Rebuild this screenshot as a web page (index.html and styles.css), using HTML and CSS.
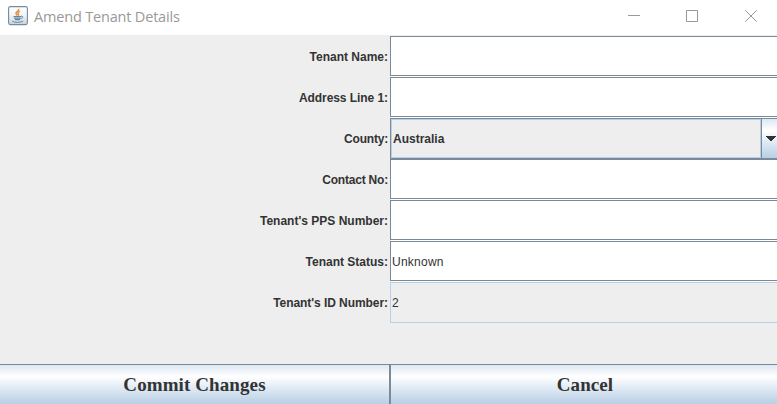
FILE: index.html
```html
<!DOCTYPE html>
<html lang="en">
<head>
<meta charset="utf-8">
<title>Amend Tenant Details</title>
<link rel="stylesheet" href="styles.css">
</head>
<body>
<div class="window">
  <header class="titlebar">
    <svg class="app-icon" width="20" height="20" viewBox="0 0 20 20">
      <defs><linearGradient id="tile" x1="0" y1="0" x2="0" y2="1"><stop offset="0" stop-color="#fff"/><stop offset=".45" stop-color="#f4f6f7"/><stop offset="1" stop-color="#c9d3dc"/></linearGradient></defs>
      <rect x=".6" y=".6" width="18.8" height="18" rx="1.8" fill="url(#tile)" stroke="#6f8ca3" stroke-width="1.1"/>
      <path d="M10.8 2.8C11.5 5 7.3 5.6 8 7.5c.2.8 1 1.2 1.2 2M12 5.4c-2.3 1-2.6 1.8-1.7 2.7.5.6.2 1.2-.3 1.6" fill="none" stroke="#e8924b" stroke-width="1.5"/>
      <path d="M5.5 10.5h7.6M6 12.1h6.8M7 13.6h5" fill="none" stroke="#5f86a3" stroke-width="1.2"/>
      <path d="M13 10.2c2.6-.5 2.3 2-.3 2.6M4.3 15.2c2 1.6 8.5 1.5 10.8-.1" fill="none" stroke="#5f86a3" stroke-width="1"/>
    </svg>
    <h1 class="title">Amend Tenant Details</h1>
    <div class="controls">
      <svg width="12" height="12" viewBox="0 0 12 12"><path d="M0 5.5h12"/></svg>
      <svg class="maximize" width="12" height="12" viewBox="0 0 12 12"><path d="M.5.5h11v11H.5z"/></svg>
      <svg width="12" height="12" viewBox="0 0 12 12"><path d="M.3.3l11.4 11.4M11.7.3L.3 11.7"/></svg>
    </div>
  </header>
  <main class="form">
    <div class="row"><span class="label">Tenant Name:</span><div class="field"></div></div>
    <div class="row"><span class="label snug">Address Line 1:</span><div class="field"></div></div>
    <div class="row"><span class="label tight">County:</span>
      <div class="combo"><span class="value">Australia</span><span class="arrow"><svg width="10" height="5" viewBox="0 0 10 5" shape-rendering="crispEdges"><path d="M0 0h10v1H9v1H8v1H7v1H6v1H4V4H3V3H2V2H1V1H0z" fill="#333"/></svg></span></div>
    </div>
    <div class="row"><span class="label tight">Contact No:</span><div class="field"></div></div>
    <div class="row"><span class="label">Tenant's PPS Number:</span><div class="field"></div></div>
    <div class="row"><span class="label">Tenant Status:</span><div class="field">Unknown</div></div>
    <div class="row"><span class="label snug">Tenant's ID Number:</span><div class="field readonly">2</div></div>
  </main>
  <footer class="actions">
    <button class="button">Commit Changes</button>
    <button class="button">Cancel</button>
  </footer>
</div>
</body>
</html>
```
FILE: styles.css
```css
* { box-sizing: border-box; }
body { margin: 0; overflow: hidden; }
.window {
  width: 777px;
  height: 404px;
  display: flex;
  flex-direction: column;
  overflow: hidden;
  background: #eee;
  color: #333;
  font: 12px "Liberation Sans", Arial, sans-serif;
}
.titlebar {
  height: 35px;
  flex: none;
  display: flex;
  align-items: center;
  padding: 0 20px 3px 8px;
  background: #fff;
}
.app-icon { flex: none; margin-right: 6px; }
.title {
  margin: 0;
  flex: 1;
  color: #999;
  font: 400 14.5px "Open Sans", "Noto Sans", sans-serif;
  letter-spacing: -0.18px;
  white-space: nowrap;
}
.controls { display: flex; gap: 46px; }
.controls svg { fill: none; stroke: #999; stroke-width: 1; }
.controls .maximize { margin-right: 1px; }
.form { flex: 1; padding-top: 1px; }
.row {
  height: 41px;
  display: grid;
  grid-template-columns: 388px 387px;
  column-gap: 2px;
}
.label {
  align-self: center;
  text-align: right;
  font-weight: 700;
  white-space: nowrap;
}
.snug { letter-spacing: -0.06px; }
.tight { letter-spacing: -0.2px; }
.field {
  height: 40px;
  width: 400px;
  display: flex;
  align-items: center;
  padding: 1px 0 0 1px;
  background: #fff;
  border: 1px solid #7a8a99;
  box-shadow: 1px 1px 0 #fff;
  letter-spacing: 0.25px;
}
.readonly {
  height: 41px;
  background: #eee;
  border-color: #b8cfe5;
  box-shadow: none;
}
.combo {
  width: 400px;
  display: flex;
  border: 1px solid #7a8a99;
}
.value {
  width: 370px;
  display: flex;
  align-items: center;
  padding-left: 1px;
  border: 1px solid #b8cfe5;
  font-weight: 700;
}
.arrow {
  flex: 1;
  display: flex;
  align-items: center;
  padding-left: 4px;
  border-left: 1px solid #7a8a99;
  background: linear-gradient(#dde8f3, #fff 30%, #dde8f3 62%, #b8cfe5);
}
.actions {
  height: 40px;
  flex: none;
  display: grid;
  grid-template-columns: 390px 390px;
}
.button {
  margin: 0;
  padding: 1px 0 0;
  border: 1px solid #7a8a99;
  border-width: 1px 1px 0;
  border-radius: 0;
  background: linear-gradient(#dde8f3, #fff 30%, #dde8f3 62%, #b8cfe5);
  color: #333;
  font: 700 19px "Liberation Serif", "Times New Roman", serif;
  letter-spacing: 0.1px;
}
.button:first-child { border-left: 0; }
```
